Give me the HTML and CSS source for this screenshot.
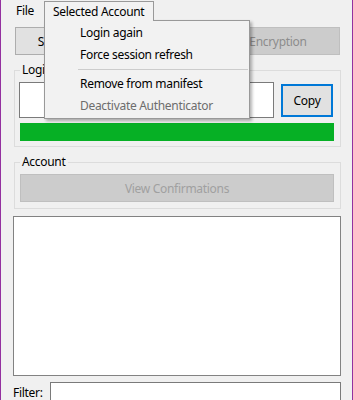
FILE: index.html
```html
<!DOCTYPE html>
<html>
<head>
    <title>Authenticator</title>
    <link rel="stylesheet" href="styles.css">
</head>
<body>
    <div class="window">
        <div class="menubar">
            <div class="menu-item">File</div>
            <div class="menu-open">
                <div class="menu-title">Selected Account</div>
                <div class="menu-drop">
                    <div class="drop-item">Login again</div>
                    <div class="drop-item">Force session refresh</div>
                    <div class="drop-sep"></div>
                    <div class="drop-item">Remove from manifest</div>
                    <div class="drop-item disabled">Deactivate Authenticator</div>
                </div>
            </div>
        </div>

        <div class="main">
            <div class="button-row">
                <button class="btn setup-btn">Setup New Account</button>
                <button class="btn" disabled>Manage Encryption</button>
            </div>

            <fieldset class="group">
                <legend>Login Token</legend>
                <div class="group-body">
                    <div class="token-row">
                        <input type="text" class="token-box">
                        <button class="btn copy-btn">Copy</button>
                    </div>
                    <div class="progress"></div>
                </div>
            </fieldset>

            <fieldset class="group account">
                <legend>Account</legend>
                <div class="group-body">
                    <button class="btn wide" disabled>View Confirmations</button>
                </div>
            </fieldset>

            <div class="listbox"></div>

            <div class="filter-row">
                <label for="filter">Filter:</label>
                <input type="text" id="filter" class="filter-box">
            </div>
        </div>
    </div>
</body>
</html>
```

FILE: styles.css
```css
body {
    margin: 0;
    font-family: "Noto Sans", "Open Sans", sans-serif;
    font-size: 12px;
    letter-spacing: -0.3px;
    color: #000;
    background-color: #f0f0f0;
}
.window {
    width: 353px;
    height: 400px;
    box-sizing: border-box;
    border-left: 1px solid #93309f;
    border-right: 1px solid #93309f;
    background-color: #f0f0f0;
    overflow: hidden;
}
.menubar {
    display: flex;
    height: 20px;
    padding: 1px 0 0 8px;
    box-sizing: border-box;
}
.menu-item {
    padding: 0 7px;
    margin-right: 3px;
    line-height: 19px;
}
.menu-open {
    position: relative;
}
.menu-title {
    position: relative;
    z-index: 2;
    height: 20px;
    padding: 0 9px 0 8px;
    line-height: 19px;
    border: 1px solid #999;
    border-bottom: none;
    background-color: #f2f2f2;
    box-sizing: border-box;
}
.menu-drop {
    position: absolute;
    z-index: 1;
    top: 19px;
    left: 0;
    width: 206px;
    padding: 1px;
    border: 1px solid #999;
    background-color: #f2f2f2;
    box-shadow: 2px 2px 3px rgba(0, 0, 0, 0.3);
    box-sizing: border-box;
}
.drop-item {
    height: 22px;
    line-height: 22px;
    padding-left: 34px;
}
.drop-item.disabled {
    color: #6d6d6d;
}
.drop-sep {
    height: 1px;
    margin: 3px 0 3px 32px;
    background-color: #ccc;
}
.main {
    padding: 0 11px 0 12px;
}
.btn {
    font-family: inherit;
    font-size: 12px;
    letter-spacing: -0.3px;
    color: #000;
    background-color: #e1e1e1;
    border: 1px solid #adadad;
    padding: 0;
}
.btn:disabled {
    color: #a0a0a0;
    background-color: #cccccc;
    border-color: #bfbfbf;
}
.button-row {
    display: flex;
    gap: 4px;
    margin: 7px 1px 0 2px;
}
.button-row .btn {
    flex: 1;
    height: 28px;
}
.button-row .setup-btn {
    flex: 0 0 150px;
}
.button-row .btn:disabled {
    color: #8c8c8c;
}
.group {
    margin: 7px 0 0 1px;
    padding: 0;
    border: 1px solid #dcdcdc;
}
.group legend {
    margin-left: 5px;
    padding: 0 2px;
    line-height: 16px;
}
.group-body {
    padding: 4px 6px 5px 4px;
}
.token-row {
    display: flex;
    align-items: center;
    gap: 7px;
}
.token-box {
    width: 255px;
    height: 36px;
    box-sizing: border-box;
    border: 1px solid #7a7a7a;
    background-color: #fff;
    margin: 0;
}
.copy-btn {
    width: 52px;
    height: 33px;
    border: 2px solid #0078d7;
}
.progress {
    height: 18px;
    margin: 5px 0 0 1px;
    background-color: #06b025;
}
.account .group-body {
    padding: 4px 6px 6px 5px;
}
.wide {
    width: 100%;
    height: 28px;
}
.listbox {
    height: 160px;
    margin-top: 7px;
    border: 1px solid #828282;
    background-color: #fff;
    box-sizing: border-box;
}
.filter-row {
    display: flex;
    align-items: flex-start;
    margin-top: 6px;
}
.filter-row label {
    width: 37px;
    margin-top: 4px;
    line-height: 14px;
}
.filter-box {
    flex: 1;
    height: 24px;
    margin: 0;
    box-sizing: border-box;
    border: 1px solid #7a7a7a;
    background-color: #fff;
}
```
